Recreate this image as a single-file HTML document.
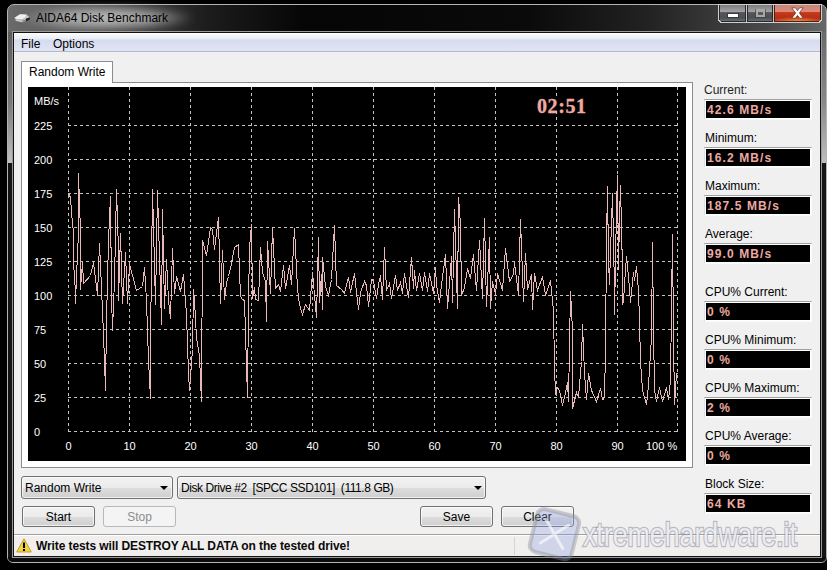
<!DOCTYPE html>
<html><head><meta charset="utf-8">
<style>
*{margin:0;padding:0;box-sizing:border-box}
html,body{width:827px;height:570px;overflow:hidden;background:#000}
body{position:relative;font-family:"Liberation Sans",sans-serif;font-size:12px;color:#000}
.a{position:absolute}
.t{position:absolute;white-space:nowrap;line-height:1}
#win{left:7px;top:4px;width:820px;height:559px;border:1px solid #b4b4b4;border-radius:7px 7px 6px 6px;
 background:linear-gradient(90deg,#6a6a6a 0px,#5a5a5a 60px,#1c1c1c 200px,#050505 300px,#0a0a0a 520px,#222 640px,#4a4a4a 760px,#686868 819px);overflow:hidden}
#lf{left:0px;top:27px;width:5px;height:131px;background:linear-gradient(180deg,#5c5c5c,#777 70px,#c0c0c0 130px)}
#rf{left:813px;top:27px;width:5px;height:131px;background:linear-gradient(180deg,#6a6a6a,#888 70px,#bdbdbd 130px)}
#lfb{left:0px;top:158px;width:5px;height:400px;background:#141414}
#rfb{left:813px;top:158px;width:5px;height:400px;background:#141414}
#bf{left:0;top:552px;width:820px;height:10px;background:#0c0c0c}
#client{left:13px;top:32px;width:808px;height:525px;border:1px solid #111;background:#f0f0f0;box-shadow:0 0 0 1px #9a9a9a}
#menu{left:0;top:0;width:806px;height:19px;border-bottom:1px solid #b6bac8;
 background:linear-gradient(180deg,#fff 0px,#f5f6fa 2px,#e9ecf5 6px,#d6dcef 7px,#dae0f1 12px,#dfe5f4 18px)}
.lbl{font-size:12px;color:#1e1e1e;margin-left:-1px}
.vb{position:absolute;left:704px;width:108px;height:21px;border-top:1px solid #a0a0a0;border-left:1px solid #e0e0e0;border-right:1px solid #fafafa;border-bottom:1px solid #fafafa;padding:1px;background:#fff}
.vb div{width:104px;height:17px;background:#000;color:#eca8a2;font-family:"Liberation Sans",sans-serif;font-weight:bold;font-size:12px;letter-spacing:1.1px;line-height:18px;padding-left:1px;white-space:nowrap}
.btn{position:absolute;height:21px;border:1px solid #707070;border-radius:3px;background:linear-gradient(180deg,#f2f2f2 0%,#ebebeb 50%,#dddddd 51%,#cfcfcf 100%);box-shadow:inset 0 0 0 1px rgba(255,255,255,0.7);text-align:center;font-size:12px;line-height:21px;color:#000}
.cmb{position:absolute;height:23px;border:1px solid #707070;border-radius:3px;background:linear-gradient(180deg,#f2f2f2 0%,#ebebeb 50%,#dddddd 51%,#cfcfcf 100%);box-shadow:inset 0 0 0 1px rgba(255,255,255,0.7);font-size:12px;line-height:23px;color:#000;padding-left:3px;white-space:nowrap}
.arr{position:absolute;top:9px;width:0;height:0;border-left:4px solid transparent;border-right:4px solid transparent;border-top:4px solid #000}
.ax{font-size:11px;color:#fff}
</style></head><body>
<div id="win" class="a">
 <div id="lf" class="a"></div><div id="rf" class="a"></div>
 <div id="lfb" class="a"></div><div id="rfb" class="a"></div>
 <div id="bf" class="a"></div>
</div>
<!-- title glow + text -->
<div class="a" style="left:20px;top:5px;width:175px;height:26px;filter:blur(4px);background:radial-gradient(ellipse 50% 50% at 50% 50%,rgba(215,215,215,0.85) 0%,rgba(200,200,200,0.7) 55%,rgba(160,160,160,0) 100%)"></div>
<svg class="a" style="left:10px;top:8px" width="24" height="20" viewBox="0 0 24 20">
 <path d="M4.2 10 L10 6 L17 6.4 L20.3 9.3 L20 12.3 L12.5 14.6 L5 12.8 Z" fill="#8e8e8e" opacity="0.9"/>
 <path d="M4.5 9.8 L10 6.2 L16.6 6.6 L15.5 9.5 L12 11.5 L6.5 11.5 Z" fill="#f0f0f0"/>
 <path d="M12 11.5 L15.5 9.5 L16.6 6.8 L19.5 9.2 L13 12.5 Z" fill="#c8c8c8"/>
 <path d="M6 12 L12 12.3 L12.5 14.3 L5.5 12.8 Z" fill="#d0d0d0"/>
 <path d="M15.8 10.8 L19.8 9.2 L19.8 11.8 L16 13.4 Z" fill="#222"/>
</svg>
<div class="t m" style="left:36px;top:12px;font-size:12px;color:#000">AIDA64 Disk Benchmark</div>
<!-- caption buttons -->
<svg class="a" style="left:716px;top:3px" width="108" height="22" viewBox="716 3 108 22" shape-rendering="crispEdges">
 <defs>
  <linearGradient id="gm" x1="0" y1="0" x2="0" y2="1">
   <stop offset="0" stop-color="#7c7c7c"/><stop offset="0.45" stop-color="#a6a6a6"/><stop offset="0.47" stop-color="#54585c"/><stop offset="0.8" stop-color="#4c5054"/><stop offset="1" stop-color="#6a6e72"/>
  </linearGradient>
  <linearGradient id="gc" x1="0" y1="0" x2="0" y2="1">
   <stop offset="0" stop-color="#c98578"/><stop offset="0.42" stop-color="#dc8a78"/><stop offset="0.47" stop-color="#c8391c"/><stop offset="0.8" stop-color="#b52f16"/><stop offset="1" stop-color="#c24a2c"/>
  </linearGradient>
  <radialGradient id="go" cx="0.5" cy="1" r="0.5"><stop offset="0" stop-color="rgba(255,160,60,0.75)"/><stop offset="1" stop-color="rgba(255,140,40,0)"/></radialGradient>
 </defs>
 <path d="M718 4 L822 4 L822 18 Q822 23 817 23 L723 23 Q718 23 718 18 Z" fill="#cfcfcf"/>
 <path d="M719 5 L746 5 L746 22 L724 22 Q719 22 719 17 Z" fill="#2a2a2a"/>
 <rect x="720" y="5" width="25" height="16" fill="url(#gm)"/>
 <rect x="747" y="5" width="26" height="17" fill="#2a2a2a"/>
 <rect x="748" y="5" width="24" height="16" fill="url(#gm)"/>
 <path d="M774 5 L821 5 L821 17 Q821 22 816 22 L774 22 Z" fill="#4a2018"/>
 <rect x="775" y="5" width="45" height="16" fill="url(#gc)"/>
 <rect x="775" y="12" width="45" height="9" fill="url(#go)"/>
 <rect x="746" y="5" width="1" height="17" fill="#c8c8c8"/>
 <rect x="773" y="5" width="1" height="17" fill="#d0c0bc"/>
 <rect x="727" y="13" width="12" height="5" fill="#2a2a2a" opacity="0.6"/>
 <rect x="728" y="14" width="10" height="3" fill="#fff"/>
 <rect x="755" y="9" width="11" height="9" fill="#3a3a3a" opacity="0.55"/>
 <rect x="756" y="9" width="9" height="8" fill="#a8a8a8"/>
 <rect x="758" y="12" width="5" height="3" fill="#5a5a5a"/>
</svg>
<svg class="a" style="left:791px;top:7px" width="13" height="12" viewBox="0 0 13 12"><path d="M0.8 0.8 L4.3 0.8 L6.5 3.6 L8.7 0.8 L12.2 0.8 L8.4 6 L12.2 11.2 L8.7 11.2 L6.5 8.4 L4.3 11.2 L0.8 11.2 L4.6 6 Z" fill="#fff" stroke="#5a2a20" stroke-width="0.7" stroke-linejoin="round"/></svg>

<div id="client" class="a">
 <div id="menu" class="a"></div>
</div>
<div class="t m" style="left:21px;top:38px">File</div>
<div class="t m" style="left:53px;top:38px">Options</div>

<!-- tab -->
<div class="a" style="left:21px;top:61px;width:92px;height:23px;border:1px solid #898c95;border-bottom:0;background:#fff"></div>
<div class="a" style="left:21px;top:82px;width:672px;height:386px;border:1px solid #898c95;background:#fff"></div>
<div class="a" style="left:22px;top:82px;width:90px;height:2px;background:#fff"></div>
<div class="t m" style="left:29px;top:66px">Random Write</div>

<!-- chart -->
<div class="a" style="left:28px;top:87px;width:658px;height:374px;background:#000"></div>
<svg class="a" style="left:28px;top:87px" width="658" height="374" viewBox="28 87 658 374">
<g stroke="#c4c4c4" stroke-width="1" stroke-dasharray="3 3" shape-rendering="crispEdges" fill="none">
<line x1="68.5" y1="87" x2="68.5" y2="432"/>
<line x1="129.5" y1="87" x2="129.5" y2="432"/>
<line x1="190.5" y1="87" x2="190.5" y2="432"/>
<line x1="251.5" y1="87" x2="251.5" y2="432"/>
<line x1="312.5" y1="87" x2="312.5" y2="432"/>
<line x1="373.5" y1="87" x2="373.5" y2="432"/>
<line x1="434.5" y1="87" x2="434.5" y2="432"/>
<line x1="495.5" y1="87" x2="495.5" y2="432"/>
<line x1="556.5" y1="87" x2="556.5" y2="432"/>
<line x1="617.5" y1="87" x2="617.5" y2="432"/>
<line x1="677.5" y1="87" x2="677.5" y2="432"/>
<line x1="68" y1="431.5" x2="677" y2="431.5"/>
<line x1="68" y1="397.5" x2="677" y2="397.5"/>
<line x1="68" y1="363.5" x2="677" y2="363.5"/>
<line x1="68" y1="329.5" x2="677" y2="329.5"/>
<line x1="68" y1="295.5" x2="677" y2="295.5"/>
<line x1="68" y1="261.5" x2="677" y2="261.5"/>
<line x1="68" y1="227.5" x2="677" y2="227.5"/>
<line x1="68" y1="193.5" x2="677" y2="193.5"/>
<line x1="68" y1="159.5" x2="677" y2="159.5"/>
<line x1="68" y1="125.5" x2="677" y2="125.5"/>
</g>
<polyline fill="none" stroke="#e8b8b8" stroke-width="1" shape-rendering="crispEdges" points="68.5,193.5 70.5,197.5 71.5,212.5 73.5,232.5 73.5,262.5 75.5,292.5 75.5,303.5 76.5,276.5 78.5,232.5 78.5,173.5 80.5,232.5 80.5,289.5 82.5,262.5 83.5,283.5 90.5,275.5 93.5,262.5 97.5,295.5 99.5,243.5 102.5,310.5 104.5,360.5 105.5,390.5 106.5,320.5 108.5,240.5 110.5,196.5 111.5,295.5 112.5,330.5 114.5,280.5 116.5,189.5 118.5,251.5 118.5,300.5 120.5,233.5 122.5,303.5 125.5,252.5 127.5,303.5 129.5,264.5 132.5,275.5 136.5,290.5 142.5,286.5 144.5,267.5 146.5,300.5 148.5,360.5 150.5,398.5 150.5,340.5 152.5,189.5 155.5,304.5 157.5,190.5 160.5,290.5 161.5,324.5 162.5,209.5 164.5,308.5 166.5,259.5 168.5,300.5 170.5,318.5 172.5,248.5 174.5,293.5 176.5,276.5 180.5,291.5 183.5,274.5 186.5,314.5 187.5,344.5 188.5,373.5 189.5,390.5 192.5,349.5 193.5,289.5 194.5,300.5 196.5,337.5 199.5,356.5 201.5,401.5 202.5,240.5 206.5,255.5 210.5,227.5 212.5,229.5 214.5,249.5 218.5,217.5 220.5,303.5 222.5,250.5 224.5,299.5 226.5,282.5 228.5,276.5 230.5,268.5 234.5,247.5 238.5,244.5 240.5,296.5 242.5,299.5 244.5,300.5 247.5,397.5 248.5,300.5 249.5,248.5 251.5,224.5 252.5,298.5 254.5,287.5 255.5,299.5 258.5,300.5 260.5,247.5 262.5,272.5 265.5,281.5 266.5,321.5 267.5,241.5 270.5,293.5 272.5,227.5 275.5,288.5 278.5,284.5 280.5,291.5 283.5,265.5 285.5,288.5 289.5,265.5 291.5,284.5 294.5,228.5 297.5,288.5 299.5,304.5 302.5,314.5 305.5,304.5 309.5,310.5 312.5,272.5 316.5,317.5 318.5,237.5 319.5,302.5 321.5,274.5 322.5,309.5 322.5,257.5 325.5,286.5 328.5,295.5 331.5,279.5 334.5,225.5 336.5,285.5 341.5,289.5 344.5,293.5 348.5,277.5 350.5,292.5 354.5,273.5 356.5,292.5 358.5,309.5 360.5,292.5 364.5,281.5 366.5,285.5 368.5,306.5 371.5,279.5 373.5,280.5 376.5,298.5 378.5,284.5 380.5,275.5 382.5,299.5 384.5,247.5 386.5,290.5 389.5,283.5 391.5,298.5 395.5,275.5 397.5,290.5 400.5,282.5 402.5,293.5 404.5,273.5 408.5,297.5 411.5,257.5 413.5,288.5 414.5,270.5 416.5,290.5 419.5,273.5 422.5,290.5 424.5,272.5 427.5,291.5 429.5,273.5 433.5,293.5 435.5,267.5 436.5,285.5 439.5,302.5 441.5,284.5 445.5,254.5 447.5,308.5 451.5,256.5 452.5,302.5 454.5,209.5 457.5,308.5 458.5,197.5 460.5,224.5 461.5,295.5 464.5,287.5 467.5,268.5 470.5,278.5 473.5,254.5 476.5,290.5 479.5,240.5 482.5,298.5 484.5,218.5 486.5,306.5 489.5,237.5 490.5,308.5 492.5,281.5 495.5,294.5 497.5,273.5 502.5,290.5 505.5,248.5 509.5,281.5 513.5,274.5 514.5,262.5 518.5,294.5 520.5,219.5 523.5,301.5 525.5,253.5 527.5,289.5 530.5,278.5 531.5,274.5 532.5,309.5 534.5,273.5 537.5,290.5 542.5,276.5 545.5,295.5 550.5,280.5 552.5,300.5 553.5,311.5 554.5,366.5 555.5,394.5 557.5,387.5 559.5,390.5 562.5,405.5 565.5,392.5 567.5,382.5 568.5,401.5 570.5,291.5 572.5,330.5 572.5,408.5 576.5,392.5 578.5,397.5 581.5,361.5 582.5,324.5 584.5,373.5 586.5,399.5 588.5,373.5 591.5,390.5 596.5,401.5 600.5,388.5 602.5,399.5 604.5,398.5 605.5,349.5 606.5,241.5 607.5,186.5 608.5,260.5 609.5,284.5 611.5,222.5 612.5,193.5 614.5,290.5 614.5,314.5 616.5,208.5 617.5,175.5 618.5,269.5 619.5,217.5 620.5,185.5 622.5,270.5 622.5,304.5 623.5,300.5 625.5,269.5 626.5,256.5 628.5,276.5 630.5,302.5 633.5,272.5 634.5,280.5 636.5,266.5 638.5,290.5 639.5,321.5 640.5,361.5 642.5,390.5 646.5,404.5 648.5,385.5 651.5,337.5 652.5,242.5 653.5,328.5 654.5,390.5 656.5,401.5 659.5,387.5 662.5,401.5 666.5,387.5 668.5,399.5 670.5,380.5 672.5,234.5 673.5,337.5 674.5,404.5 676.5,373.5 677.5,373.5"/>
</svg>
<div class="t ax m" style="left:34px;top:96px">MB/s</div>
<div class="t ax" style="left:34px;top:427px">0</div>
<div class="t ax" style="left:34px;top:393px">25</div>
<div class="t ax" style="left:34px;top:359px">50</div>
<div class="t ax" style="left:34px;top:325px">75</div>
<div class="t ax" style="left:34px;top:291px">100</div>
<div class="t ax" style="left:34px;top:257px">125</div>
<div class="t ax" style="left:34px;top:223px">150</div>
<div class="t ax" style="left:34px;top:189px">175</div>
<div class="t ax" style="left:34px;top:155px">200</div>
<div class="t ax" style="left:34px;top:121px">225</div>
<div class="t ax" style="left:38px;top:441px;width:61px;text-align:center">0</div>
<div class="t ax" style="left:99px;top:441px;width:61px;text-align:center">10</div>
<div class="t ax" style="left:160px;top:441px;width:61px;text-align:center">20</div>
<div class="t ax" style="left:221px;top:441px;width:61px;text-align:center">30</div>
<div class="t ax" style="left:282px;top:441px;width:61px;text-align:center">40</div>
<div class="t ax" style="left:343px;top:441px;width:61px;text-align:center">50</div>
<div class="t ax" style="left:404px;top:441px;width:61px;text-align:center">60</div>
<div class="t ax" style="left:465px;top:441px;width:61px;text-align:center">70</div>
<div class="t ax" style="left:526px;top:441px;width:61px;text-align:center">80</div>
<div class="t ax" style="left:587px;top:441px;width:61px;text-align:center">90</div>
<div class="t ax" style="left:646px;top:441px">100 %</div>
<div class="a" style="left:537px;top:97px;width:50px;height:14px;background:#000"></div>
<div class="t m" style="left:537px;top:96px;font-family:'Liberation Serif',serif;font-weight:bold;font-size:20px;letter-spacing:0.6px;color:#eeaaa2;-webkit-text-stroke:0.35px #eeaaa2">02:51</div>

<!-- right panel -->
<div class="t lbl m" style="left:705px;top:84px">Current:</div>
<div class="vb" style="top:99px"><div>42.6 MB/s</div></div>
<div class="t lblNone" style="left:705px;top:132px">Minimum:</div>
<div class="vb" style="top:147px"><div>16.2 MB/s</div></div>
<div class="t lblNone" style="left:705px;top:180px">Maximum:</div>
<div class="vb" style="top:195px"><div>187.5 MB/s</div></div>
<div class="t lblNone" style="left:705px;top:228px">Average:</div>
<div class="vb" style="top:243px"><div>99.0 MB/s</div></div>
<div class="t lblNone" style="left:705px;top:286px">CPU% Current:</div>
<div class="vb" style="top:301px"><div>0 %</div></div>
<div class="t lblNone" style="left:705px;top:334px">CPU% Minimum:</div>
<div class="vb" style="top:349px"><div>0 %</div></div>
<div class="t lblNone" style="left:705px;top:382px">CPU% Maximum:</div>
<div class="vb" style="top:397px"><div>2 %</div></div>
<div class="t lblNone" style="left:705px;top:430px">CPU% Average:</div>
<div class="vb" style="top:445px"><div>0 %</div></div>
<div class="t lblNone" style="left:705px;top:478px">Block Size:</div>
<div class="vb" style="top:493px"><div>64 KB</div></div>

<!-- combos and buttons -->
<div class="cmb" style="left:21px;top:476px;width:152px"><span class="m">Random Write</span><div class="arr" style="left:138px"></div></div>
<div class="cmb" style="left:177px;top:476px;width:309px"><span class="m" style="letter-spacing:-0.43px">Disk Drive #2&nbsp; [SPCC SSD101]&nbsp; (111.8 GB)</span><div class="arr" style="left:296px"></div></div>
<div class="btn" style="left:22px;top:506px;width:73px"><span class="m">Start</span></div>
<div class="btn" style="left:103px;top:506px;width:73px;border-color:#b5b9bc;background:#f4f4f4;color:#8d8d8d;box-shadow:none">Stop</div>
<div class="btn" style="left:420px;top:506px;width:73px">Save</div>
<div class="btn" style="left:501px;top:506px;width:73px">Clear</div>

<!-- status bar -->
<div class="a" style="left:14px;top:534px;width:806px;height:1px;background:#a0a0a0"></div>
<div class="a" style="left:14px;top:535px;width:806px;height:1px;background:#fff"></div>
<div class="a" style="left:14px;top:536px;width:806px;height:20px;background:#f1eeee"></div>
<div class="a" style="left:514px;top:537px;width:1px;height:18px;background:#d5d5d5"></div>
<svg class="a" style="left:16px;top:538px" width="16" height="15" viewBox="0 0 16 15"><path d="M8 0.8 L15.3 14 L0.7 14 Z" fill="#f3d33a" stroke="#b89a20" stroke-width="0.9" stroke-linejoin="round"/><rect x="7" y="4.5" width="2" height="5.5" fill="#000"/><rect x="7" y="11" width="2" height="2" fill="#000"/></svg>
<div class="t m" style="left:36px;top:540px;font-weight:bold;font-size:12px;letter-spacing:-0.1px;color:#0a0a0a">Write tests will DESTROY ALL DATA on the tested drive!</div>
<!-- watermark -->
<svg class="a" style="left:515px;top:500px" width="300" height="70" viewBox="515 500 300 70">
 <g transform="rotate(14 554 534)">
  <rect x="533" y="512" width="43" height="44" rx="7" ry="7" fill="rgba(140,160,225,0.32)" stroke="rgba(140,140,145,0.4)" stroke-width="4"/>
  <path d="M543 522 L566 546 M566 522 L543 546" stroke="rgba(255,255,255,0.6)" stroke-width="3" stroke-linecap="round"/>
 </g>
 <text x="583" y="546" textLength="214" lengthAdjust="spacingAndGlyphs" font-family="Liberation Sans" font-size="33" fill="rgba(244,245,252,0.85)" stroke="rgba(140,140,150,0.55)" stroke-width="2.6" paint-order="stroke" style="font-weight:normal">xtremehardware.it</text>
</svg>
</body></html>
